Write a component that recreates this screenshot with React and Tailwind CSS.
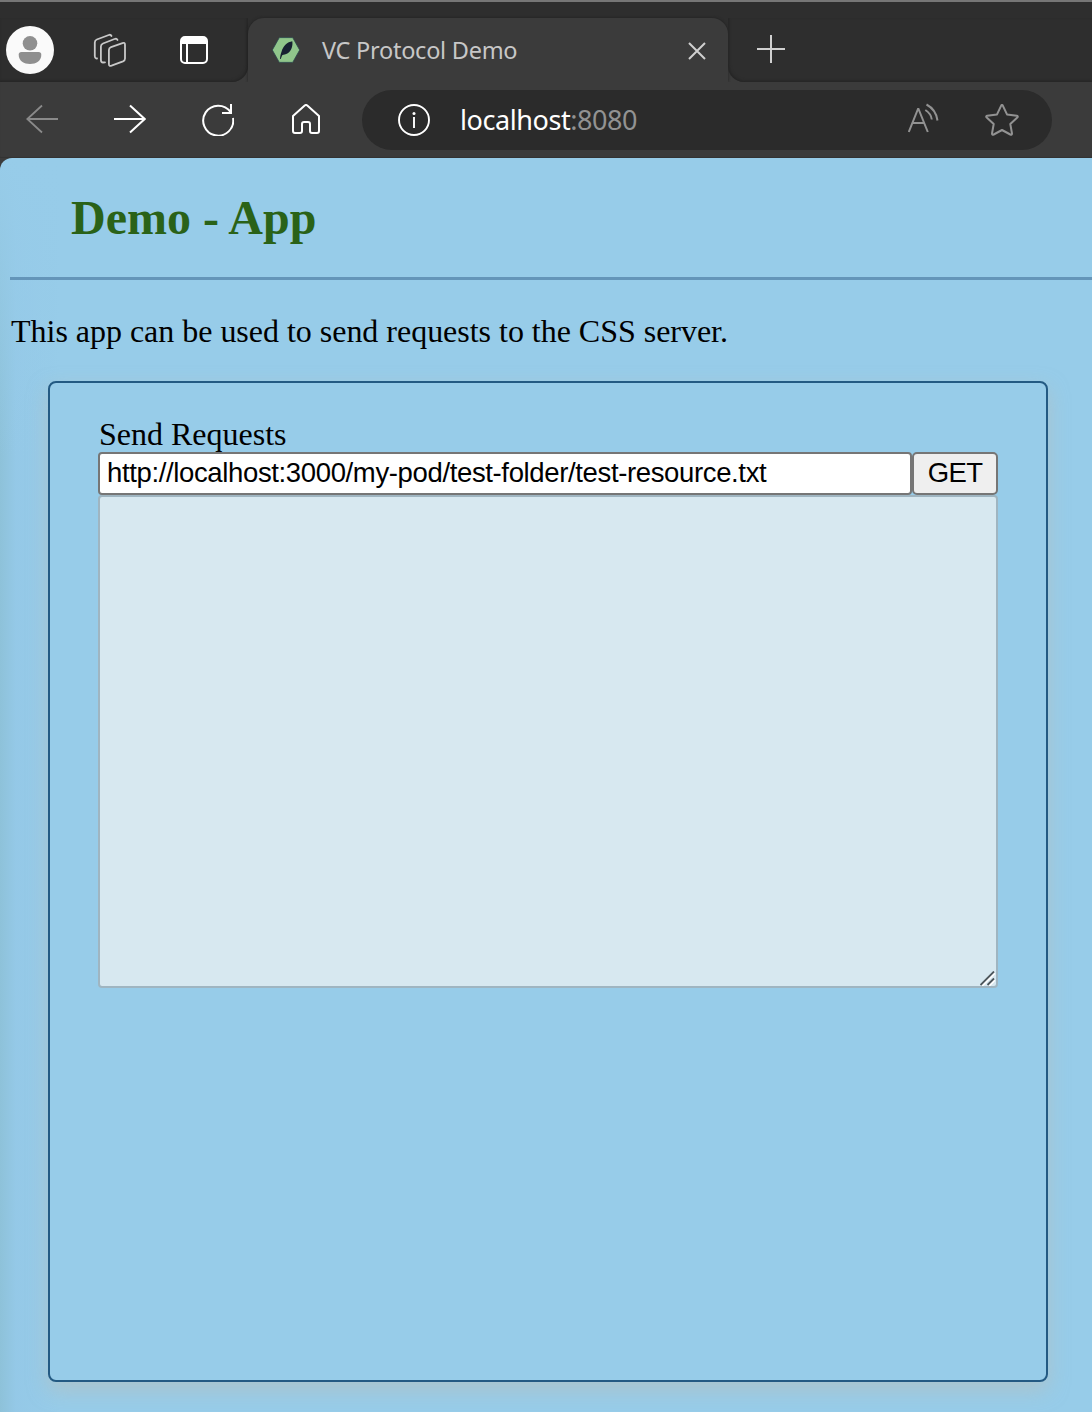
function Favicon() {
  return (
    <svg className="ml-[24px] shrink-0" width="28" height="26" viewBox="0 0 28 26">
      <path d="M7.300.600h13.400L27.700 13l-7 12.400H7.300L.3 13z" fill="#90c68b" stroke="#29434a" strokeWidth=".8" />
      <path d="M8 22c.2-3 .7-5 1.600-7.500C11 9 15.500 5 20.300 4.300c.7 4.300-.8 9.500-4.500 12-2.200 1.500-4 1-5.600 2L8.700 22z" fill="#172131" />
    </svg>
  );
}

function Tab() {
  return (
    <div className="mt-[16px] flex h-[64px] w-[480px] shrink-0 items-center rounded-t-[16px] bg-[#3b3b3b] shadow-[0_0_3px_#1f1f1f]">
      <Favicon />
      <span className="ml-[22px] w-[366px] shrink-0 whitespace-nowrap font-['Noto_Sans',sans-serif] text-[23.500px] leading-8 tracking-[-0.260px] text-[#c7c7c7]">VC Protocol Demo</span>
      <svg className="mt-[2px] shrink-0" width="18" height="18" viewBox="0 0 18 18" stroke="#d0d0d0" strokeWidth="2">
        <path d="M1 1l16 16M17 1L1 17" />
      </svg>
    </div>
  );
}

function BrowserTabs() {
  return (
    <div className="flex h-[82px] shrink-0 border-t-2 border-[#767676] bg-[#3b3b3b]">
      <div className="w-[248px] shrink-0 rounded-br-[16px] bg-[#2e2e2e] pt-[16px]">
        <div className="flex h-[64px] items-center rounded-br-[16px] shadow-[inset_-1px_-1px_3px_#242424]">
          <svg className="ml-[6px]" width="48" height="48" viewBox="0 0 48 48">
            <circle cx="24" cy="24" r="24" fill="#fafafa" />
            <circle cx="24" cy="17.300" r="7.300" fill="#8f8f8f" />
            <path d="M15.500 26h17q2.800 0 2.800 2.800C35.300 35 30 38 24 38s-11.300-3-11.300-9.200Q12.700 26 15.500 26z" fill="#8f8f8f" />
          </svg>
          <svg className="ml-[39px]" width="34" height="34" viewBox="0 0 34 34" fill="none" stroke="#c8c8c8" strokeWidth="1.8" strokeLinecap="round" strokeLinejoin="round">
            <path d="M4 25.500L3 25.300Q1.800 25 1.800 23V9.500Q1.800 7.300 3.800 6.500L15.800 2Q17.700 1.300 18.500 3" />
            <path d="M12 29.400L10 29.500Q7.900 29.500 7.900 27V13.500Q7.900 11.400 10 10.500L21.500 6Q24 5.200 24.500 7" />
            <path d="M18 14.100l11.500-4q2.500-.9 2.500 1.800v13.500q0 2.200-2 3l-11.500 4.300q-2.600.9-2.600-1.800V17q0-2.200 2.100-2.900z" />
          </svg>
          <svg className="ml-[53px]" width="28" height="28" viewBox="0 0 28 28" fill="none" stroke="#fff" strokeWidth="2">
            <rect x="1" y="1" width="26" height="26" rx="4" />
            <path d="M1 8V5q0-4 4-4h18q4 0 4 4v3z" fill="#fff" stroke="none" />
            <path d="M7 7v20" />
          </svg>
        </div>
      </div>
      <div className="flex bg-[linear-gradient(#2e2e2e_0_40px,#3b3b3b_40px)]">
        <Tab />
      </div>
      <div className="flex-1 rounded-bl-[16px] bg-[#2e2e2e] pt-[16px]">
        <div className="flex h-[64px] items-center rounded-bl-[16px] pl-[29px] shadow-[inset_1px_-1px_3px_#242424]">
          <svg className="mb-[2px]" width="28" height="28" viewBox="0 0 28 28" stroke="#d0d0d0" strokeWidth="2">
            <path d="M14 0v28M0 14h28" />
          </svg>
        </div>
      </div>
    </div>
  );
}

function Toolbar() {
  return (
    <div className="flex h-[76px] shrink-0 items-start bg-[#3b3b3b] shadow-[inset_0_-1px_1px_#333333]">
      <svg className="ml-[26px] mt-[22px]" width="32" height="30" viewBox="0 0 32 30" fill="none" stroke="#8a8a8a" strokeWidth="1.8">
        <path d="M16 1.500L1.300 15 16 28.500M1 15h31" />
      </svg>
      <svg className="ml-[56px] mt-[22px]" width="32" height="30" viewBox="0 0 32 30" fill="none" stroke="#fff" strokeWidth="2">
        <path d="M16 1.500L30.700 15 16 28.500M0 15h31" />
      </svg>
      <svg className="ml-[56px] mt-[22px]" width="32" height="32" viewBox="0 0 32 32" fill="none" stroke="#fff" strokeWidth="2">
        <path d="M28.500 8A15 15 0 1 0 31 14M29 0v9h-9" />
      </svg>
      <svg className="ml-[58px] mt-[22px]" width="28" height="30" viewBox="0 0 28 30" fill="none" stroke="#fff" strokeWidth="2" strokeLinejoin="round">
        <path d="M1 12L12.700 1.500q1.300-1 2.600 0L27 12v15q0 2-2 2h-5q-2 0-2-2v-7q0-2-2-2h-4q-2 0-2 2v7q0 2-2 2H3q-2 0-2-2z" />
      </svg>
      <div className="ml-[42px] mt-[8px] flex h-[60px] w-[690px] items-center rounded-full bg-[#2b2b2b]">
        <svg className="ml-[36px] shrink-0" width="32" height="32" viewBox="0 0 32 32" fill="none" stroke="#fff" strokeWidth="1.9">
          <circle cx="16" cy="16" r="15" />
          <path d="M16 13v11" />
          <circle cx="16" cy="9.500" r="1.500" fill="#fff" stroke="none" />
        </svg>
        <span className="ml-[30px] w-[448px] shrink-0 whitespace-nowrap font-['Noto_Sans',sans-serif] text-[27px] leading-8 tracking-[-0.430px] text-white">localhost<span className="text-[#929292]">:8080</span></span>
        <svg className="mb-[4px] shrink-0" width="32" height="30" viewBox="0 0 32 30" fill="none" stroke="#929292" strokeWidth="2">
          <path d="M.8 29L10 6h.5l9.300 23M4.300 20h12M18.500 1.500C25 5 28.500 10 29.500 17.500M17.300 7c4 2.500 6 5.500 6.500 9.500" />
        </svg>
        <svg className="ml-[45px] shrink-0" width="34" height="32" viewBox="0 0 34 32" fill="none" stroke="#929292" strokeWidth="2" strokeLinejoin="round">
          <path d="M16.200 1.600q.8-1.300 1.600 0l4.200 8.800 9.800 1.400q1.700.5.500 1.700l-7 6.500 1.700 9.500q0 1.600-1.700 1L17 26l-8.300 4.500q-1.700.6-1.700-1L8.700 20l-7-6.500q-1.200-1.200.5-1.700l9.800-1.400z" />
        </svg>
      </div>
    </div>
  );
}

export default function App() {
  return (
    <div className="flex h-[1412px] w-[1092px] flex-col overflow-hidden bg-[#3b3b3b]">
      <BrowserTabs />
      <Toolbar />
      <main className="flex-1 overflow-hidden rounded-tl-[12px] bg-[#97cce9] bg-[linear-gradient(#97cce9,rgba(151,204,233,0)_300px),linear-gradient(90deg,rgba(120,170,180,0.3),rgba(140,190,225,0.25)_16px,rgba(140,190,225,0)_60px)] pl-[10px] font-['Liberation_Serif',serif] text-black">
        <h1 className="ml-[61px] pt-[32px] text-[48px] font-bold leading-[56px] text-[#2a6218]">Demo - App</h1>
        <hr className="mt-[31px] border-0 border-t-[3px] border-[#6495b9]" />
        <p className="mt-[33px] pl-px text-[32px] leading-[36px] tracking-[-0.020px]">This app can be used to send requests to the CSS server.</p>
        <section className="ml-[38px] mt-[32px] h-[1001px] w-[1000px] rounded-[8px] border-2 border-[#235a83] bg-[#97cce9] px-[48px] pt-[33px] shadow-[0_8px_20px_rgba(185,190,185,0.6)]">
          <label className="block pl-px text-[32px] leading-[36px]">Send Requests</label>
          <div className="flex h-[43px]">
            <input className="h-[43px] w-[814px] rounded-[4px] border-2 border-[#767676] bg-white px-[7px] pb-[1px] font-['Liberation_Sans',sans-serif] text-[27.500px] leading-8 tracking-[-0.360px] outline-none" defaultValue="http://localhost:3000/my-pod/test-folder/test-resource.txt" />
            <button className="h-[43px] w-[86px] rounded-[5px] border-2 border-[#767676] bg-[#efefef] pb-[1px] text-center font-['Liberation_Sans',sans-serif] text-[27.500px] leading-8 tracking-[-0.600px]">GET</button>
          </div>
          <div className="flex h-[493px] w-[900px] items-end justify-end rounded-[4px] border-2 border-[#9fb5c1] bg-[#d7e8f0]">
            <svg className="mr-px" width="15" height="15" viewBox="0 0 15 15" fill="none" strokeWidth="1.8">
              <path d="M2 15L15 2M9 15l6-6" stroke="#fff" />
              <path d="M.5 14L14 .5M7.500 14L14 7.500" stroke="#4d565b" />
            </svg>
          </div>
        </section>
      </main>
    </div>
  );
}
